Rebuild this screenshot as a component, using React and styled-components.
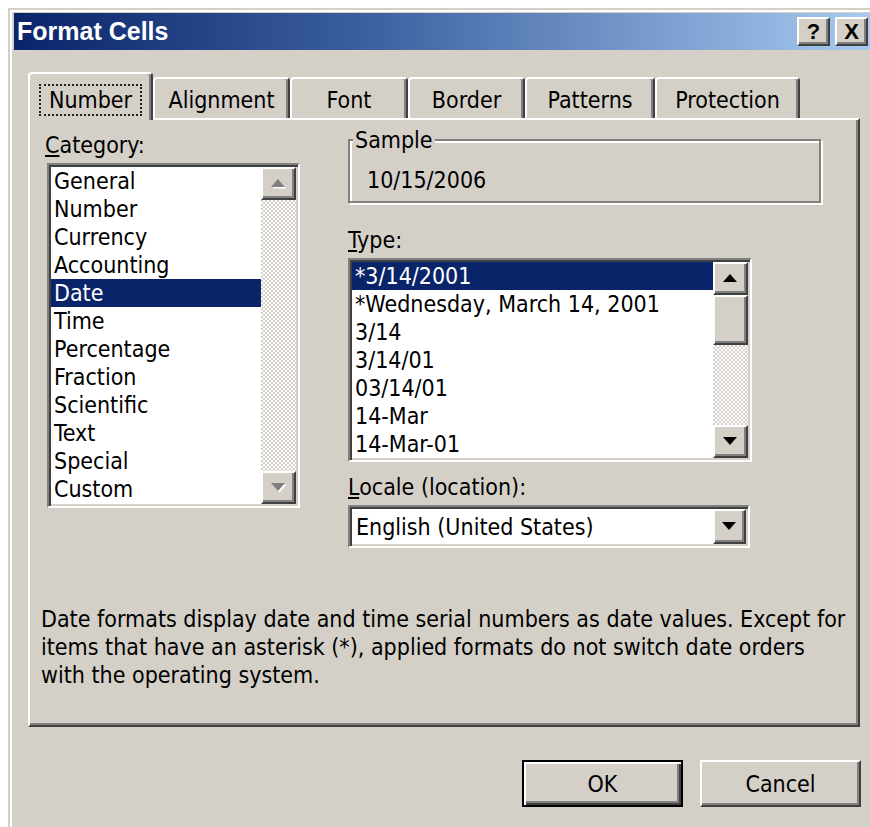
import React from 'react';
import styled, { createGlobalStyle, css } from 'styled-components';

const FACE = '#d4d0c8';
const SHADOW = '#808080';
const DARK = '#404040';
const NAVY = '#0a246a';
const UI_FONT = '"DejaVu Sans Condensed", "Liberation Sans", sans-serif';

const GlobalStyle = createGlobalStyle`
  html, body {
    margin: 0;
    padding: 0;
    background: #fff;
  }
  #root {
    width: 870px;
    height: 827px;
    overflow: hidden;
  }
`;

// classic 3d bevels
const raised = css`
  background: ${FACE};
  border: 2px solid;
  border-color: #fff ${DARK} ${DARK} #fff;
  box-shadow: inset -2px -2px 0 ${SHADOW};
`;

const sunken = css`
  border: 2px solid;
  border-color: ${SHADOW} #fff #fff ${SHADOW};
  box-shadow: inset 2px 2px 0 ${DARK}, inset -2px -2px 0 ${FACE};
`;

const Screen = styled.div`
  padding: 8px 0 0 8px;
`;

const Window = styled.div`
  width: 868px;
  height: 840px;
  box-sizing: border-box;
  background: ${FACE};
  border: 2px solid ${FACE};
  border-right-color: ${DARK};
  border-bottom-color: ${DARK};
  box-shadow: inset 2px 2px 0 #fff, inset -2px -2px 0 ${SHADOW};
  padding: 3px 4px 0 4px;
  font-family: ${UI_FONT};
  font-size: 23px;
  color: #000;
`;

const TitleBar = styled.div`
  height: 37px;
  display: flex;
  align-items: center;
  padding: 0 2px 0 3px;
  background: linear-gradient(90deg, ${NAVY} 0%, #3a5e9e 40%, #a6caf0 100%);
`;

const Title = styled.div`
  flex: 1;
  font-family: "Liberation Sans", Arial, sans-serif;
  font-weight: bold;
  font-size: 25px;
  color: #fff;
  white-space: nowrap;
`;

const CaptionButtons = styled.div`
  display: flex;
  gap: 5px;
`;

const CaptionButton = styled.div`
  ${raised};
  box-sizing: border-box;
  width: 33px;
  height: 29px;
  display: flex;
  align-items: center;
  justify-content: center;
  font-family: "Liberation Sans", Arial, sans-serif;
  font-weight: bold;
  font-size: 22px;
  line-height: 1;
`;

const Body = styled.div`
  padding: 22px 0 0 14px;
`;

const TabRow = styled.div`
  display: flex;
  align-items: flex-start;
  height: 48px;
  margin-bottom: -2px;
`;

const Tab = styled.div`
  position: relative;
  z-index: ${p => (p.$active ? 1 : 0)};
  box-sizing: border-box;
  width: ${p => p.$w}px;
  height: ${p => (p.$active ? 48 : 41)}px;
  margin-top: ${p => (p.$active ? 0 : 5)}px;
  padding-top: ${p => (p.$active ? 10 : 5)}px;
  background: ${FACE};
  border: 2px solid #fff;
  border-bottom: none;
  border-right-color: ${DARK};
  border-radius: 4px 4px 0 0;
  box-shadow: inset -2px 0 0 ${SHADOW};
  display: flex;
  justify-content: center;
  align-items: flex-start;
`;

const TabLabel = styled.span`
  line-height: 28px;
  padding: 0 8px;
  border: 2px dotted ${p => (p.$focus ? '#222' : 'transparent')};
  white-space: nowrap;
`;

const Panel = styled.div`
  box-sizing: border-box;
  width: 832px;
  height: 609px;
  background: ${FACE};
  border: 2px solid #fff;
  border-right-color: ${DARK};
  border-bottom-color: ${DARK};
  box-shadow: inset -2px -2px 0 ${SHADOW};
  padding: 6px 0 0 17px;
`;

const Columns = styled.div`
  display: grid;
  grid-template-columns: 253px 473px;
  column-gap: 48px;
  align-items: start;
`;

const Column = styled.div`
  display: flex;
  flex-direction: column;
  align-items: flex-start;
`;

const FieldLabel = styled.div`
  line-height: 28px;
  margin: ${p => p.$mt || 0}px 0 4px ${p => p.$ml || 0}px;
  white-space: nowrap;
`;

const Group = styled.fieldset`
  box-sizing: border-box;
  width: 473px;
  margin: 0;
  padding: 0 0 7px 3px;
  min-width: 0;
  border: 2px solid ${SHADOW};
  box-shadow: inset 2px 2px 0 #fff, 2px 2px 0 #fff;
`;

const GroupTitle = styled.legend`
  padding: 0 2px;
  line-height: 28px;
  background: ${FACE};
`;

const SampleValue = styled.div`
  line-height: 28px;
  margin-top: 12px;
  padding-left: 14px;
`;

const ListBox = styled.div`
  ${sunken};
  box-sizing: border-box;
  display: flex;
  width: ${p => p.$w}px;
  height: ${p => p.$h}px;
  padding: 2px;
  background: #fff;
`;

const Items = styled.div`
  flex: 1;
  overflow: hidden;
`;

const Item = styled.div`
  height: 28px;
  line-height: 28px;
  padding-left: 3px;
  white-space: nowrap;
  background: ${p => (p.$selected ? NAVY : 'transparent')};
  color: ${p => (p.$selected ? '#fff' : '#000')};
`;

const ScrollBar = styled.div`
  width: 35px;
  flex-shrink: 0;
  display: flex;
  flex-direction: column;
`;

const ArrowButton = styled.div`
  ${raised};
  box-sizing: border-box;
  width: ${p => p.$w || 35}px;
  height: ${p => p.$h || 33}px;
  flex-shrink: 0;
  display: flex;
  align-items: center;
  justify-content: center;
`;

const Track = styled.div`
  flex: 1;
  display: flex;
  flex-direction: column;
  background: repeating-conic-gradient(#fff 0 25%, ${FACE} 0 50%) 0 0 / 4px 4px;
`;

const Thumb = styled.div`
  ${raised};
  box-sizing: border-box;
  height: 50px;
`;

const Combo = styled.div`
  ${sunken};
  box-sizing: border-box;
  width: 402px;
  height: 43px;
  display: flex;
  align-items: center;
  padding: 2px;
  background: #fff;
`;

const ComboText = styled.div`
  flex: 1;
  padding-left: 4px;
  line-height: 28px;
  white-space: nowrap;
`;

const Description = styled.p`
  margin: 57px 0 0 -6px;
  line-height: 28px;
  white-space: nowrap;
`;

const Actions = styled.div`
  display: flex;
  justify-content: flex-end;
  gap: 17px;
  width: 833px;
  margin-top: 33px;
`;

const PushButton = styled.div`
  box-sizing: border-box;
  width: 161px;
  height: 47px;
  display: flex;
  align-items: center;
  justify-content: center;
  background: ${FACE};
  border: 2px solid;
  ${p =>
    p.$default
      ? css`
          border-color: #000;
          box-shadow: inset 2px 2px 0 #fff, inset -2px -2px 0 ${DARK}, inset -4px -4px 0 ${SHADOW};
        `
      : css`
          border-color: #fff ${DARK} ${DARK} #fff;
          box-shadow: inset -2px -2px 0 ${SHADOW};
        `}
`;

function Arrow({ dir = 'up', disabled }) {
  const pts = dir === 'up' ? '0,8 7,0 14,8' : '0,0 14,0 7,8';
  return (
    <svg width="16" height="10" viewBox="0 0 16 10">
      {disabled && <polygon points={pts} fill="#fff" transform="translate(1.5 1.5)" />}
      <polygon points={pts} fill={disabled ? SHADOW : '#000'} />
    </svg>
  );
}

const categories = [
  'General', 'Number', 'Currency', 'Accounting', 'Date', 'Time',
  'Percentage', 'Fraction', 'Scientific', 'Text', 'Special', 'Custom',
];

const dateTypes = [
  '*3/14/2001', '*Wednesday, March 14, 2001', '3/14', '3/14/01',
  '03/14/01', '14-Mar', '14-Mar-01',
];

const tabs = [
  { name: 'Number', w: 125 },
  { name: 'Alignment', w: 137 },
  { name: 'Font', w: 118 },
  { name: 'Border', w: 117 },
  { name: 'Patterns', w: 130 },
  { name: 'Protection', w: 145 },
];

export default function App() {
  return (
    <Screen>
      <GlobalStyle />
      <Window>
        <TitleBar>
          <Title>Format Cells</Title>
          <CaptionButtons>
            <CaptionButton>?</CaptionButton>
            <CaptionButton>X</CaptionButton>
          </CaptionButtons>
        </TitleBar>

        <Body>
          <TabRow>
            {tabs.map((t, i) => (
              <Tab key={t.name} $w={t.w} $active={i === 0}>
                <TabLabel $focus={i === 0}>{t.name}</TabLabel>
              </Tab>
            ))}
          </TabRow>

          <Panel>
            <Columns>
              <Column>
                <FieldLabel $mt={5} $ml={-2}>
                  <u>C</u>ategory:
                </FieldLabel>
                <ListBox $w={253} $h={345}>
                  <Items>
                    {categories.map(c => (
                      <Item key={c} $selected={c === 'Date'}>{c}</Item>
                    ))}
                  </Items>
                  <ScrollBar>
                    <ArrowButton><Arrow dir="up" disabled /></ArrowButton>
                    <Track />
                    <ArrowButton><Arrow dir="down" disabled /></ArrowButton>
                  </ScrollBar>
                </ListBox>
              </Column>

              <Column>
                <Group>
                  <GroupTitle>Sample</GroupTitle>
                  <SampleValue>10/15/2006</SampleValue>
                </Group>

                <FieldLabel $mt={23}>
                  <u>T</u>ype:
                </FieldLabel>
                <ListBox $w={404} $h={204}>
                  <Items>
                    {dateTypes.map((d, i) => (
                      <Item key={d} $selected={i === 0}>{d}</Item>
                    ))}
                  </Items>
                  <ScrollBar>
                    <ArrowButton><Arrow dir="up" /></ArrowButton>
                    <Track>
                      <Thumb />
                    </Track>
                    <ArrowButton><Arrow dir="down" /></ArrowButton>
                  </ScrollBar>
                </ListBox>

                <FieldLabel $mt={11}>
                  <u>L</u>ocale (location):
                </FieldLabel>
                <Combo>
                  <ComboText>English (United States)</ComboText>
                  <ArrowButton $w={33} $h={35}><Arrow dir="down" /></ArrowButton>
                </Combo>
              </Column>
            </Columns>

            <Description>
              Date formats display date and time serial numbers as date values. Except for
              <br />
              items that have an asterisk (*), applied formats do not switch date orders
              <br />
              with the operating system.
            </Description>
          </Panel>

          <Actions>
            <PushButton $default>OK</PushButton>
            <PushButton>Cancel</PushButton>
          </Actions>
        </Body>
      </Window>
    </Screen>
  );
}
